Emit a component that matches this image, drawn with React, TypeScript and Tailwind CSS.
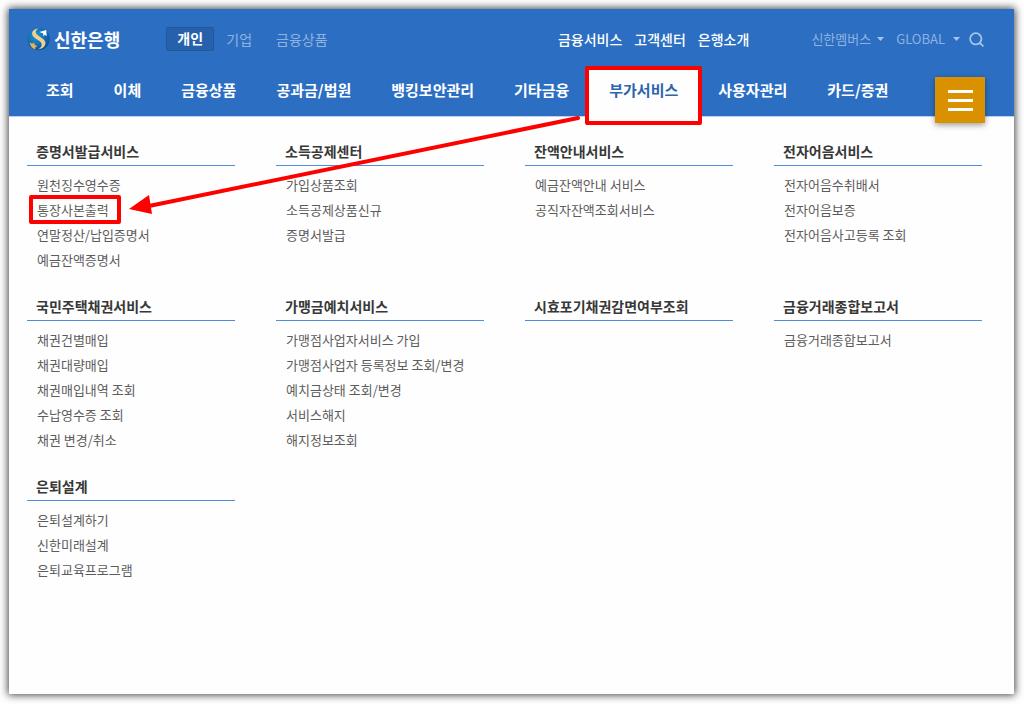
import React from 'react';
import { Search } from 'lucide-react';

interface MenuGroup {
  title: string;
  items: string[];
}

const NAV_ITEMS = [
  '조회',
  '이체',
  '금융상품',
  '공과금/법원',
  '뱅킹보안관리',
  '기타금융',
  '부가서비스',
  '사용자관리',
  '카드/증권',
];
const ACTIVE_NAV = '부가서비스';
const MARKED_ITEM = '통장사본출력';

const MENU_GROUPS: MenuGroup[] = [
  {
    title: '증명서발급서비스',
    items: ['원천징수영수증', '통장사본출력', '연말정산/납입증명서', '예금잔액증명서'],
  },
  { title: '소득공제센터', items: ['가입상품조회', '소득공제상품신규', '증명서발급'] },
  { title: '잔액안내서비스', items: ['예금잔액안내 서비스', '공직자잔액조회서비스'] },
  { title: '전자어음서비스', items: ['전자어음수취배서', '전자어음보증', '전자어음사고등록 조회'] },
  {
    title: '국민주택채권서비스',
    items: ['채권건별매입', '채권대량매입', '채권매입내역 조회', '수납영수증 조회', '채권 변경/취소'],
  },
  {
    title: '가맹금예치서비스',
    items: [
      '가맹점사업자서비스 가입',
      '가맹점사업자 등록정보 조회/변경',
      '예치금상태 조회/변경',
      '서비스해지',
      '해지정보조회',
    ],
  },
  { title: '시효포기채권감면여부조회', items: [] },
  { title: '금융거래종합보고서', items: ['금융거래종합보고서'] },
  { title: '은퇴설계', items: ['은퇴설계하기', '신한미래설계', '은퇴교육프로그램'] },
];

const Logo = () => (
  <a href="#" className="flex items-center gap-1 text-[18px] leading-6 font-bold text-white">
    <svg width="23" height="24" viewBox="0 0 23 24" aria-hidden="true">
      <defs>
        <radialGradient id="globe" cx="0.4" cy="0.35" r="0.7">
          <stop offset="0" stopColor="#1c96d8" />
          <stop offset="1" stopColor="#0b4f96" />
        </radialGradient>
      </defs>
      <circle cx="11.5" cy="12" r="11.2" fill="url(#globe)" />
      <path
        d="M11.500 1.500C6.500 1.800 4.200 5 5.500 8.200c1.400 3.300 7.800 5 9 8.200.8 2.300-.8 4.300-3.500 5.900 5.200-.6 8.300-3.900 7.200-7.600-1.200-3.800-8-5.400-9.200-8.500-.8-2 .3-3.500 2.500-4.700z"
        fill="#f0d08c"
      />
      <path d="M12.400 5l6.800-1.900.5 6.200-1.800-1.600-1.700 1.600.1-2.900z" fill="#fff" />
      <path d="M2.600 15.200l2.500 1.500 2-1.300.6 2.600 2.700 1.100-2.200 1.300.1 2.200c-2.800-1-5.200-3.700-5.700-7.400z" fill="#e8b34e" />
    </svg>
    신한은행
  </a>
);

const Caret = () => (
  <svg width="7" height="4" viewBox="0 0 7 4" aria-hidden="true">
    <path d="M0 0h7L3.500 4z" fill="#a9c4e8" />
  </svg>
);

// 강조용 빨간 테두리
const Highlight = ({ className }: { className: string }) => (
  <span className={`pointer-events-none absolute rounded-xs border-4 border-[#fe0000] ${className}`} />
);

const TopBar = () => (
  <div className="flex h-[60px] items-center pl-[18px] pr-[29px] text-[14px]">
    <Logo />
    <div className="ml-[46px] flex items-center">
      <button
        type="button"
        className="h-6 w-12 rounded-xs border border-[#24569b] bg-[#2861ab] pb-0.5 text-[14px] leading-none font-bold text-white"
      >
        개인
      </button>
      <a href="#" className="ml-3 text-[#8fb2e0]">기업</a>
      <a href="#" className="ml-6 text-[#8fb2e0]">금융상품</a>
    </div>
    <div className="ml-auto flex items-center gap-3 font-medium text-white">
      <a href="#">금융서비스</a>
      <a href="#">고객센터</a>
      <a href="#">은행소개</a>
    </div>
    <div className="ml-[62px] flex items-center text-[13px] text-[#8fb2e0]">
      <button type="button" className="flex items-center gap-1.5">
        신한멤버스
        <Caret />
      </button>
      <button type="button" className="ml-3 flex items-center gap-2">
        GLOBAL
        <Caret />
      </button>
      <button type="button" aria-label="검색" className="ml-2">
        <Search size={17} strokeWidth={2.5} color="#a9c4e8" />
      </button>
    </div>
  </div>
);

const MainNav = () => (
  <nav className="pl-[17px]">
    <ul className="flex h-[47px] text-[15px] font-bold whitespace-nowrap">
      {NAV_ITEMS.map((item) => {
        const active = item === ACTIVE_NAV;
        return (
          <li key={item} className="relative">
            <a
              href="#"
              className={`block h-12 px-5 leading-[42px] ${active ? 'bg-[#fefefe] text-[#2c65ae]' : 'text-white'}`}
            >
              {item}
            </a>
            {active && <Highlight className="-inset-x-1 -top-[3px] -bottom-[9px]" />}
          </li>
        );
      })}
    </ul>
  </nav>
);

const MenuSection = ({ title, items }: MenuGroup) => (
  <section>
    <h2 className="mb-1.5 border-b border-[#4f8ddd] pb-0.5 pl-[9px] text-[14px] leading-6 font-bold text-[#383838]">
      {title}
    </h2>
    <ul className="pl-2.5 text-[13px] leading-[25px] text-[#5c5c5c]">
      {items.map((item) => (
        <li key={item}>
          <a href="#" className="relative inline-block">
            {item}
            {item === MARKED_ITEM && <Highlight className="-top-0.5 -right-3 -bottom-0.5 -left-2" />}
          </a>
        </li>
      ))}
    </ul>
  </section>
);

const App = () => {
  return (
    <div className="flex min-h-screen bg-white pt-[9px] pr-2.5 pb-2.5 pl-[9px] font-['Noto_Sans_CJK_KR',sans-serif]">
      <div className="relative flex-1 bg-[#fefefe] shadow-[0_0_8px_1px_rgba(0,0,0,0.75)]">
        <header className="relative border-b border-[#b9d0ee] bg-[#2c6fc2]">
          <TopBar />
          <MainNav />
          <button
            type="button"
            aria-label="전체메뉴"
            className="absolute right-[29px] -bottom-[7px] flex h-[46px] w-[50px] flex-col items-center justify-center gap-1.5 bg-[#d99100] shadow-[0_2px_6px_rgba(0,0,0,0.4)]"
          >
            <span className="h-[3px] w-[25px] bg-white" />
            <span className="h-[3px] w-[25px] bg-white" />
            <span className="h-[3px] w-[25px] bg-white" />
          </button>
        </header>

        <main className="grid grid-cols-4 gap-x-[41px] gap-y-[22px] pt-[22px] pr-8 pb-10 pl-[18px]">
          {MENU_GROUPS.map((group) => (
            <MenuSection key={group.title} {...group} />
          ))}
        </main>

        {/* 메뉴 탭에서 통장사본출력으로 이어지는 화살표 */}
        <svg
          className="pointer-events-none absolute top-[105px] left-[120px]"
          width="454"
          height="104"
          viewBox="0 0 454 104"
          aria-hidden="true"
        >
          <path d="M20 92L449 4" stroke="#fe0000" strokeWidth="4" strokeLinecap="round" />
          <path d="M0 95L20 81L23 100z" fill="#fe0000" />
        </svg>
      </div>
    </div>
  );
};

export default App;
